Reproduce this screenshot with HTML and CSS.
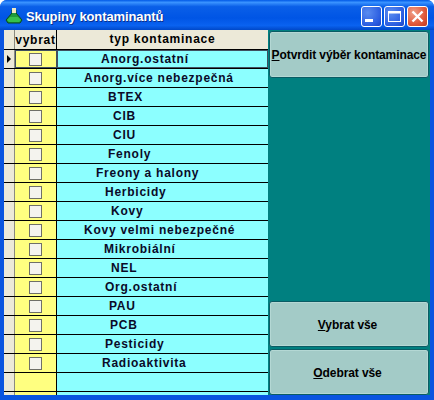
FILE: index.html
```html
<!DOCTYPE html>
<html lang="cs">
<head>
    <meta charset="UTF-8">
    <title>Skupiny kontaminantů</title>
    <link rel="stylesheet" href="styles.css">
</head>
<body>
    <div class="window">
        <div class="titlebar">
            <svg class="app-icon" width="18" height="18" viewBox="0 0 18 18">
                <path d="M7 3h4v3l6 7-2 3H3l-2-3 6-7z" fill="#1f9a3a" stroke="#0a4a1a" stroke-width="1"/>
                <rect x="7" y="1" width="4" height="5" fill="#f0e8c0"/>
                <path d="M5 10h8l3 3-2 2H4l-2-2z" fill="#35c04c"/>
            </svg>
            <span class="title">Skupiny kontaminantů</span>
            <div class="caption-buttons">
                <div class="cap-btn">
                    <svg width="21" height="21" viewBox="0 0 21 21"><rect x="4" y="13" width="8" height="3" fill="#fff"/></svg>
                </div>
                <div class="cap-btn">
                    <svg width="21" height="21" viewBox="0 0 21 21"><rect x="4.5" y="5.5" width="12" height="10" fill="none" stroke="#fff"/><rect x="4" y="5" width="13" height="2.5" fill="#fff"/></svg>
                </div>
                <div class="cap-btn close">
                    <svg width="21" height="21" viewBox="0 0 21 21"><path d="M5.5 5.5l10 10M15.5 5.5l-10 10" stroke="#fff" stroke-width="2.4"/></svg>
                </div>
            </div>
        </div>
        <div class="client">
            <div class="grid">
                <div class="row head">
                    <div class="sel"></div>
                    <div class="pick">vybrat</div>
                    <div class="name">typ kontaminace</div>
                </div>
                <div class="row current">
                    <div class="sel"><span class="arrow"></span></div>
                    <div class="pick"><span class="check"></span></div>
                    <div class="name"><span class="x44">Anorg.ostatní</span></div>
                </div>
                <div class="row"><div class="sel"></div><div class="pick"><span class="check"></span></div><div class="name"><span class="x27">Anorg.více nebezpečná</span></div></div>
                <div class="row"><div class="sel"></div><div class="pick"><span class="check"></span></div><div class="name"><span class="x51">BTEX</span></div></div>
                <div class="row"><div class="sel"></div><div class="pick"><span class="check"></span></div><div class="name"><span class="x56">CIB</span></div></div>
                <div class="row"><div class="sel"></div><div class="pick"><span class="check"></span></div><div class="name"><span class="x56">CIU</span></div></div>
                <div class="row"><div class="sel"></div><div class="pick"><span class="check"></span></div><div class="name"><span class="x51">Fenoly</span></div></div>
                <div class="row"><div class="sel"></div><div class="pick"><span class="check"></span></div><div class="name"><span class="x39">Freony a halony</span></div></div>
                <div class="row"><div class="sel"></div><div class="pick"><span class="check"></span></div><div class="name"><span class="x48">Herbicidy</span></div></div>
                <div class="row"><div class="sel"></div><div class="pick"><span class="check"></span></div><div class="name"><span class="x54">Kovy</span></div></div>
                <div class="row"><div class="sel"></div><div class="pick"><span class="check"></span></div><div class="name"><span class="x27">Kovy velmi nebezpečné</span></div></div>
                <div class="row"><div class="sel"></div><div class="pick"><span class="check"></span></div><div class="name"><span class="x47">Mikrobiální</span></div></div>
                <div class="row"><div class="sel"></div><div class="pick"><span class="check"></span></div><div class="name"><span class="x54">NEL</span></div></div>
                <div class="row"><div class="sel"></div><div class="pick"><span class="check"></span></div><div class="name"><span class="x48">Org.ostatní</span></div></div>
                <div class="row"><div class="sel"></div><div class="pick"><span class="check"></span></div><div class="name"><span class="x52">PAU</span></div></div>
                <div class="row"><div class="sel"></div><div class="pick"><span class="check"></span></div><div class="name"><span class="x53">PCB</span></div></div>
                <div class="row"><div class="sel"></div><div class="pick"><span class="check"></span></div><div class="name"><span class="x48">Pesticidy</span></div></div>
                <div class="row"><div class="sel"></div><div class="pick"><span class="check"></span></div><div class="name"><span class="x45">Radioaktivita</span></div></div>
                <div class="row"><div class="sel"></div><div class="pick"></div><div class="name"></div></div>
                <div class="row cut"><div class="sel"></div><div class="pick"></div><div class="name"></div></div>
            </div>
            <div class="side">
                <button class="btn top"><u>P</u>otvrdit výběr kontaminace</button>
                <div class="gap"></div>
                <button class="btn"><u>V</u>ybrat vše</button>
                <button class="btn"><u>O</u>debrat vše</button>
            </div>
        </div>
    </div>
</body>
</html>
```

FILE: styles.css
```css
html, body {
    margin: 0;
    height: 100%;
    overflow: hidden;
    background: #fff;
}

.window {
    width: 434px;
    height: 400px;
    display: flex;
    flex-direction: column;
    background: #0a55e0;
    border-radius: 7px 7px 0 0;
    overflow: hidden;
    font-family: "Liberation Sans", Arial, sans-serif;
}

.titlebar {
    height: 30px;
    flex: none;
    display: flex;
    align-items: center;
    padding: 2px 6px 0 5px;
    box-sizing: border-box;
    background: linear-gradient(#0058e6 0%, #3a93ff 8%, #0a5fe8 22%, #0055e5 60%, #0a62f0 85%, #0048c8 100%);
}

.app-icon {
    margin-right: 3px;
}

.title {
    color: #fff;
    font-size: 13px;
    font-weight: bold;
    letter-spacing: -0.1px;
    text-shadow: 1px 1px 0 #0a2f8c;
}

.caption-buttons {
    margin-left: auto;
    display: flex;
    gap: 2px;
}

.cap-btn {
    width: 21px;
    height: 21px;
    border: 1px solid #fff;
    border-radius: 3px;
    box-sizing: border-box;
    display: flex;
    align-items: center;
    justify-content: center;
    background: radial-gradient(circle at 30% 30%, #5a8cf0, #2a5ce0 70%, #1c44c4);
}

.cap-btn svg {
    flex: none;
}

.close {
    background: radial-gradient(circle at 30% 30%, #f0a088, #e0583a 60%, #c03a20);
}

.client {
    flex: 1;
    display: flex;
    margin: 0 4px 5px;
    min-height: 0;
    background: #008080;
}

.grid {
    width: 264px;
    flex: none;
    overflow: hidden;
    background: #ece9d8;
}

.row {
    display: flex;
    height: 19px;
    box-sizing: border-box;
    border-bottom: 1px solid #000;
    font-size: 12px;
    font-weight: bold;
    letter-spacing: 0.75px;
    color: #0a0a28;
}

.row.head {
    height: 20px;
    color: #000;
}

.sel {
    width: 10px;
    flex: none;
    border-right: 1px solid #8a8a80;
    background: #ece9d8;
    display: flex;
    align-items: center;
    justify-content: center;
}

.pick {
    width: 42px;
    flex: none;
    box-sizing: border-box;
    border-right: 1px solid #000;
    background: #ffff80;
    display: flex;
    align-items: center;
    justify-content: center;
}

.name {
    flex: 1;
    background: #8cffff;
    line-height: 19px;
}

.head .pick,
.head .name {
    background: #ece9d8;
}

.head .name {
    text-align: center;
}

.check {
    width: 13px;
    height: 13px;
    box-sizing: border-box;
    border: 1px solid #6f6f68;
    background: #f4f3ee;
}

.current .pick {
    outline: 1px solid #405060;
    outline-offset: -1px;
}

.current .name {
    outline: 1px solid #405060;
    outline-offset: -1px;
}

.arrow {
    width: 0;
    height: 0;
    border-left: 4px solid #000;
    border-top: 4px solid transparent;
    border-bottom: 4px solid transparent;
}

.side {
    flex: 1;
    display: flex;
    flex-direction: column;
    padding: 1px 1px 0 1px;
}

.btn {
    height: 46px;
    flex: none;
    margin-bottom: 2px;
    padding: 1px 3px 0 0;
    border: 1px solid #0a5c64;
    border-radius: 3px;
    background: #a3cbc7;
    color: #000;
    font-family: "Liberation Sans", Arial, sans-serif;
    font-size: 12px;
    font-weight: bold;
    letter-spacing: -0.1px;
    box-shadow: inset 0 0 0 1px #b4d8d4;
}

.btn.top {
    height: 47px;
    padding: 0;
}

.btn:last-child {
    margin-bottom: 0;
}

.gap {
    flex: 1;
}

.x27 { padding-left: 27px; }
.x39 { padding-left: 39px; }
.x44 { padding-left: 44px; }
.x45 { padding-left: 45px; }
.x47 { padding-left: 47px; }
.x48 { padding-left: 48px; }
.x51 { padding-left: 51px; }
.x52 { padding-left: 52px; }
.x53 { padding-left: 53px; }
.x54 { padding-left: 54px; }
.x56 { padding-left: 56px; }
```
